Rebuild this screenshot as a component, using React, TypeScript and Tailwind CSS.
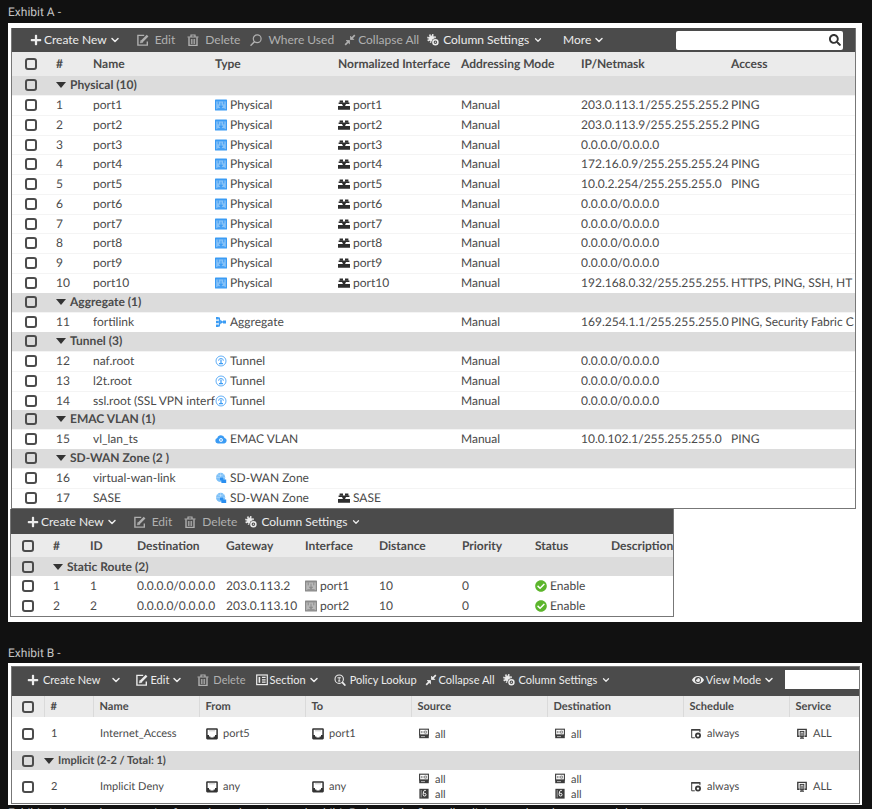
import React from 'react';
import clsx from 'clsx';
import { ChevronDown } from 'lucide-react';
import { FaPlus, FaSearch, FaEye, FaCheckCircle } from 'react-icons/fa';

type IconProps = { className?: string };

const EditIcon = ({ className }: IconProps) => (
  <svg viewBox="0 0 12 12" className={className} fill="none" stroke="currentColor">
    <path d="M7.2 1.4H.9v9.7h9.4V7.4" strokeWidth="1.4" />
    <path d="M4.6 7.6 10.6 1.6" strokeWidth="2.4" />
    <path d="m3.2 9 .6-2.6 2 2z" fill="currentColor" strokeWidth="0.4" />
  </svg>
);

const TrashIcon = ({ className }: IconProps) => (
  <svg viewBox="0 0 12 12" className={className} fill="none" stroke="currentColor">
    <path d="M0.5 3h11M4 2.6V1h4v1.6" strokeWidth="1.2" />
    <path d="M2 3.2v8.2h8V3.2" strokeWidth="1.4" />
    <path d="M4.4 5v5M6 5v5M7.6 5v5" strokeWidth="0.9" />
  </svg>
);

const WhereIcon = ({ className }: IconProps) => (
  <svg viewBox="0 0 12 12" className={className} fill="none" stroke="currentColor" strokeWidth="1.2" strokeLinecap="round">
    <circle cx="7.2" cy="4.8" r="3.9" />
    <path d="M4.4 7.8 1 11.2" strokeWidth="1.5" />
  </svg>
);

const CollapseIcon = ({ className }: IconProps) => (
  <svg viewBox="0 0 12 12" className={className} fill="currentColor" stroke="currentColor">
    <path d="M6.5 2.2v3.3h3.3zM5.5 9.8V6.5H2.2z" strokeWidth="0.8" />
    <path d="M10.8 1.2 7.5 4.5M1.2 10.8 4.5 7.5" strokeWidth="1.7" />
  </svg>
);

const GearsIcon = ({ className }: IconProps) => (
  <svg viewBox="0 0 12 12" className={className} fill="none" stroke="currentColor">
    <circle cx="4.6" cy="4.6" r="2.6" fill="currentColor" />
    <circle cx="4.6" cy="4.6" r="3.7" strokeWidth="1.6" strokeDasharray="1.6 1.3" />
    <circle cx="8.4" cy="8.2" r="3.5" className="fill-[#4b4b4b] stroke-[#4b4b4b]" />
    <circle cx="8.4" cy="8.2" r="2.5" strokeWidth="1.5" />
    <circle cx="8.4" cy="8.2" r="0.5" fill="currentColor" strokeWidth="0.4" />
  </svg>
);

const SectionIcon = ({ className }: IconProps) => (
  <svg viewBox="0 0 12 12" className={className} fill="none" stroke="currentColor">
    <rect x="0.7" y="1" width="10.6" height="9.6" strokeWidth="1.2" />
    <path d="M3.4 3v5.8" strokeWidth="1.6" />
    <path d="M6 3.4h3.6M6 5.8h3.6M6 8.2h3.6" strokeWidth="1.3" />
  </svg>
);

const LookupIcon = ({ className }: IconProps) => (
  <svg viewBox="0 0 12 12" className={className} fill="none" stroke="currentColor" strokeLinecap="round">
    <circle cx="5.2" cy="5.2" r="4.2" strokeWidth="1.1" />
    <path d="M8.6 8.6 10.8 11" strokeWidth="1.8" />
    <path d="M3.8 3.8h2.8M5.2 3.8v3.2M4.4 7h1.6" strokeWidth="0.9" />
  </svg>
);

const PhysicalIcon = ({ className }: IconProps) => (
  <svg viewBox="0 0 12 12" className={className}>
    <rect y="0.4" width="12" height="11.2" rx="0.6" className="fill-current" />
    <path d="M1.2 2.4h9.6v7.8H1.2z" fill="white" fillOpacity="0.4" />
    <path d="M3.2 2.4v3M8.8 2.4v3M6 3.6v4" stroke="currentColor" strokeWidth="1" />
    <path d="M3.6 6.8h4.8L6 9.4zM2.4 9.2h7.2v1H2.4z" className="fill-current" />
  </svg>
);

const AggregateIcon = ({ className }: IconProps) => (
  <svg viewBox="0 0 12 12" className={className} fill="none" stroke="currentColor">
    <path d="M1.4 2.2h3v7.6h-3M1.4 6H9" strokeWidth="1.2" />
    <path d="M1 1h2.6v2.4H1zM1 8.6h2.6V11H1zM1 4.8h2.6v2.4H1zM8 4.6h3v2.8H8z" fill="currentColor" stroke="none" />
    <path d="m5.2 3.4 2.8 2.6-2.8 2.6z" fill="currentColor" stroke="none" />
  </svg>
);

const TunnelIcon = ({ className }: IconProps) => (
  <svg viewBox="0 0 12 12" className={className} fill="none" stroke="currentColor">
    <circle cx="6" cy="6" r="5" strokeWidth="0.8" />
    <path d="M3.6 5.8a2.4 2.4 0 1 1 4.8 0" strokeWidth="0.8" />
    <path d="M6 4.6v3.6M4 8.6h4" strokeWidth="1.2" />
  </svg>
);

const CloudIcon = ({ className }: IconProps) => (
  <svg viewBox="0 0 12 12" className={className}>
    <path d="M2.8 10.4a2.7 2.7 0 0 1-.5-5.3A3.8 3.8 0 0 1 9.6 5a2.75 2.75 0 0 1-.4 5.4z" className="fill-current" />
    <circle cx="6" cy="7" r="1.6" fill="none" stroke="white" strokeWidth="0.8" />
    <path d="M6 6.2v1.8" stroke="white" strokeWidth="0.8" />
  </svg>
);

const ZoneIcon = ({ className }: IconProps) => (
  <svg viewBox="0 0 12 12" className={className}>
    <circle cx="5.6" cy="5.4" r="4.6" className="fill-[#7cc0f8]" />
    <path d="M1 5.4h9.2M5.6.8V10M2.2 2.4c2 1.4 4.8 1.4 6.6 0" fill="none" stroke="white" strokeOpacity="0.5" strokeWidth="0.6" />
    <path d="M5 5.4h3.2v2.2h3V11H6.4V8.6H5z" className="fill-[#2b8ff0]" />
  </svg>
);

const MappedIcon = ({ className }: IconProps) => (
  <svg viewBox="0 0 12 12" className={className} fill="currentColor">
    <path d="M1.6 1.4h3.4v2.4H1.6zM7 1.4h3.4v2.4H7zM0 7h12v3.8H0z" />
    <path d="M.6 3.6h10.8v1.3H8L6.8 7.4H5.2L4 4.9H.6z" />
  </svg>
);

const PortIcon = ({ className }: IconProps) => (
  <svg viewBox="0 0 12 12" className={className}>
    <rect x="0.9" y="0.9" width="10.2" height="9.8" rx="0.4" fill="none" stroke="currentColor" strokeWidth="1.5" />
    <path d="M1 11V7h2v1.6h1.4v.8h3.2v-.8H9V7h2v4z" className="fill-current" />
    <path d="M3 2.8h6" stroke="currentColor" strokeWidth="0.7" strokeOpacity="0.4" />
  </svg>
);

const AddressIcon = ({ className }: IconProps) => (
  <svg viewBox="0 0 12 12" className={className}>
    <rect x="1.6" y="1.2" width="8.8" height="5.8" fill="none" stroke="currentColor" strokeWidth="1.1" />
    <path d="M3.4 3v2.2M5 3v2.2M6.6 3h1.8v2.2H6.6z" fill="none" stroke="currentColor" strokeWidth="0.8" strokeOpacity="0.7" />
    <path d="M1.2 6.8h9.6v3.4H1.2z" className="fill-current" />
    <path d="M3 8.6h4" stroke="white" strokeWidth="0.6" />
  </svg>
);

const Address6Icon = ({ className }: IconProps) => (
  <svg viewBox="0 0 12 12" className={className}>
    <rect x="1.4" y="0.8" width="9.2" height="9.8" className="fill-current" />
    <path d="M7.8 2.4H6.4Q5.2 3.6 5.2 6v.6a1.4 1.4 0 1 0 1-1.3" fill="none" stroke="white" strokeWidth="1" />
    <path d="M3.2 2v7.4" stroke="white" strokeWidth="0.5" />
  </svg>
);

const ScheduleIcon = ({ className }: IconProps) => (
  <svg viewBox="0 0 12 12" className={className} fill="none" stroke="currentColor">
    <path d="M4.8 9.8H1.7V1.8h8.2v2.4" strokeWidth="1" />
    <path d="M1.2 1.8h9.2" strokeWidth="1.5" />
    <circle cx="8" cy="7.6" r="2.1" strokeWidth="1.8" />
  </svg>
);

const ServiceIcon = ({ className }: IconProps) => (
  <svg viewBox="0 0 12 12" className={className} fill="none" stroke="currentColor">
    <path d="M3.4 8.2H1.8V1.4h8.4v6.8H8.6" strokeWidth="1.4" />
    <rect x="4.2" y="3.4" width="3.6" height="5" strokeWidth="1" />
    <path d="M6 4.4V10M4 10.2h4" strokeWidth="1.2" />
  </svg>
);

const Check = ({ label }: { label: string }) => (
  <input
    type="checkbox"
    aria-label={label}
    className="block size-3 appearance-none rounded-[3px] border-2 border-[#4c4c4c] checked:bg-[#4c4c4c]"
  />
);

const Caret = () => <span className="border-x-[5px] border-t-[6px] border-x-transparent border-t-[#333]" />;

const Cell = ({ icon: Icon, color, gap = 'gap-[3px]', children }: {
  icon: React.FC<IconProps>;
  color: string;
  gap?: string;
  children: React.ReactNode;
}) => (
  <span className={clsx('flex items-center', gap)}>
    <Icon className={clsx('size-3 shrink-0', color)} />
    <span>{children}</span>
  </span>
);

interface ToolProps {
  icon?: React.FC<IconProps>;
  label: string;
  muted?: boolean;
  menu?: 'normal' | 'small';
  className?: string;
}

const Tool = ({ icon: Icon, label, muted, menu, className }: ToolProps) => (
  <button type="button" className={clsx('flex shrink-0 items-center whitespace-nowrap', muted ? 'text-[#b0b0b0]' : 'text-[#ececec]', className)}>
    {Icon && <Icon className="size-3 shrink-0" />}
    <span>{label}</span>
    {menu && <ChevronDown className={clsx('shrink-0', menu === 'small' ? 'size-2.5' : 'size-3')} strokeWidth={3} />}
  </button>
);

const physical = [
  ['203.0.113.1/255.255.255.2', 'PING'],
  ['203.0.113.9/255.255.255.2', 'PING'],
  ['0.0.0.0/0.0.0.0', ''],
  ['172.16.0.9/255.255.255.24', 'PING'],
  ['10.0.2.254/255.255.255.0', 'PING'],
  ['0.0.0.0/0.0.0.0', ''],
  ['0.0.0.0/0.0.0.0', ''],
  ['0.0.0.0/0.0.0.0', ''],
  ['0.0.0.0/0.0.0.0', ''],
  ['192.168.0.32/255.255.255.', 'HTTPS, PING, SSH, HT'],
];

interface Row {
  id: number;
  name: string;
  mapped?: string;
  mode?: string;
  ip?: string;
  access?: string;
}

interface Group {
  title: string;
  type: string;
  icon: React.FC<IconProps>;
  rows: Row[];
}

const groups: Group[] = [
  {
    title: 'Physical (10)',
    type: 'Physical',
    icon: PhysicalIcon,
    rows: physical.map(([ip, access], i) => ({
      id: i + 1,
      name: `port${i + 1}`,
      mapped: `port${i + 1}`,
      mode: 'Manual',
      ip,
      access,
    })),
  },
  {
    title: 'Aggregate (1)',
    type: 'Aggregate',
    icon: AggregateIcon,
    rows: [{ id: 11, name: 'fortilink', mode: 'Manual', ip: '169.254.1.1/255.255.255.0', access: 'PING, Security Fabric C' }],
  },
  {
    title: 'Tunnel (3)',
    type: 'Tunnel',
    icon: TunnelIcon,
    rows: [
      { id: 12, name: 'naf.root', mode: 'Manual', ip: '0.0.0.0/0.0.0.0' },
      { id: 13, name: 'l2t.root', mode: 'Manual', ip: '0.0.0.0/0.0.0.0' },
      { id: 14, name: 'ssl.root (SSL VPN interf', mode: 'Manual', ip: '0.0.0.0/0.0.0.0' },
    ],
  },
  {
    title: 'EMAC VLAN (1)',
    type: 'EMAC VLAN',
    icon: CloudIcon,
    rows: [{ id: 15, name: 'vl_lan_ts', mode: 'Manual', ip: '10.0.102.1/255.255.255.0', access: 'PING' }],
  },
  {
    title: 'SD-WAN Zone (2 )',
    type: 'SD-WAN Zone',
    icon: ZoneIcon,
    rows: [
      { id: 16, name: 'virtual-wan-link' },
      { id: 17, name: 'SASE', mapped: 'SASE' },
    ],
  },
];

const routes = [
  { id: 1, gateway: '203.0.113.2', port: 'port1' },
  { id: 2, gateway: '203.0.113.10', port: 'port2' },
];

const policies = [
  { id: 1, name: 'Internet_Access', from: 'port5', to: 'port1', v6: false },
  { id: 2, name: 'Implicit Deny', from: 'any', to: 'any', v6: true },
];

const GroupRow = ({ title, span, pad }: { title: string; span: number; pad: string }) => (
  <tr className="h-[19px] bg-[#dcdcdc] font-bold">
    <td className={pad}><Check label={`Select ${title}`} /></td>
    <td colSpan={span}>
      <span className="flex items-center gap-1"><Caret />{title}</span>
    </td>
  </tr>
);

const InterfaceTable = () => (
  <table className="w-full table-fixed whitespace-nowrap text-left">
    <colgroup>
      <col className="w-11" />
      <col className="w-[37px]" />
      <col className="w-[122px]" />
      <col className="w-[123px]" />
      <col className="w-[123px]" />
      <col className="w-[120px]" />
      <col className="w-[150px]" />
      <col />
    </colgroup>
    <thead>
      <tr className="h-6 bg-[#ebebeb]">
        <td className="pl-[13px]"><Check label="Select all interfaces" /></td>
        {['#', 'Name', 'Type', 'Normalized Interface', 'Addressing Mode', 'IP/Netmask', 'Access'].map((h) => (
          <th key={h}>{h}</th>
        ))}
      </tr>
    </thead>
    {groups.map((g) => (
      <tbody key={g.title}>
        <GroupRow title={g.title} span={7} pad="pl-[13px]" />
        {g.rows.map((r) => (
          <tr key={r.id} className="h-5 border-t border-[#f4f4f4] nth-[4n]:h-[19px]">
            <td className="pl-[13px]"><Check label={`Select ${r.name}`} /></td>
            <td>{r.id}</td>
            <td className="overflow-hidden">{r.name}</td>
            <td><Cell icon={g.icon} color="text-[#3a9bf4]">{g.type}</Cell></td>
            <td>{r.mapped && <Cell icon={MappedIcon} color="text-[#2e2e2e]">{r.mapped}</Cell>}</td>
            <td>{r.mode}</td>
            <td className="overflow-hidden">{r.ip}</td>
            <td className="overflow-hidden">{r.access}</td>
          </tr>
        ))}
      </tbody>
    ))}
  </table>
);

const RouteTable = () => (
  <table className="w-full table-fixed whitespace-nowrap text-left">
    <colgroup>
      <col className="w-[42px]" />
      <col className="w-[37px]" />
      <col className="w-[47px]" />
      <col className="w-[89px]" />
      <col className="w-[79px]" />
      <col className="w-[74px]" />
      <col className="w-[83px]" />
      <col className="w-[73px]" />
      <col className="w-[76px]" />
      <col />
    </colgroup>
    <thead>
      <tr className="h-[23px] bg-[#ebebeb]">
        <td className="pl-[11px]"><Check label="Select all routes" /></td>
        {['#', 'ID', 'Destination', 'Gateway', 'Interface', 'Distance', 'Priority', 'Status', 'Description'].map((h) => (
          <th key={h}>{h}</th>
        ))}
      </tr>
    </thead>
    <tbody>
      <GroupRow title="Static Route (2)" span={9} pad="pl-[11px]" />
      {routes.map((r) => (
        <tr key={r.id} className="h-5">
          <td className="pl-[11px]"><Check label={`Select route ${r.id}`} /></td>
          <td>{r.id}</td>
          <td>{r.id}</td>
          <td>0.0.0.0/0.0.0.0</td>
          <td>{r.gateway}</td>
          <td><Cell icon={PhysicalIcon} color="text-[#8a8a8a]">{r.port}</Cell></td>
          <td>10</td>
          <td>0</td>
          <td><Cell icon={FaCheckCircle} color="text-[#5cb52c]">Enable</Cell></td>
          <td />
        </tr>
      ))}
    </tbody>
  </table>
);

const AddressCell = ({ v6 }: { v6: boolean }) => (
  <div className="flex flex-col leading-[15px]">
    <Cell icon={AddressIcon} color="text-[#3c3c3c]" gap="gap-[5px]">all</Cell>
    {v6 && <Cell icon={Address6Icon} color="text-[#3c3c3c]" gap="gap-[5px]">all</Cell>}
  </div>
);

const PolicyTable = () => (
  <table className="w-full table-fixed whitespace-nowrap text-left text-[11px]">
    <colgroup>
      <col className="w-8" />
      <col className="w-[49px]" />
      <col className="w-[106px]" />
      <col className="w-[106px]" />
      <col className="w-[106px]" />
      <col className="w-[136px]" />
      <col className="w-[136px]" />
      <col className="w-[106px]" />
      <col />
    </colgroup>
    <thead>
      <tr className="h-[21px] bg-[#ebebeb]">
        <td className="pl-2.5"><Check label="Select all policies" /></td>
        {['#', 'Name', 'From', 'To', 'Source', 'Destination', 'Schedule', 'Service'].map((h) => (
          <th key={h} className="border-l border-[#dadada] pl-1.5">{h}</th>
        ))}
      </tr>
    </thead>
    <tbody>
      {policies.map((p) => (
        <React.Fragment key={p.id}>
          {p.v6 && <GroupRow title="Implicit (2-2 / Total: 1)" span={8} pad="pl-2.5" />}
          <tr className="h-[34px] last:h-[33px]">
            <td className="pl-2.5"><Check label={`Select ${p.name}`} /></td>
            <td className="pl-[7px]">{p.id}</td>
            <td className="pl-[7px]">{p.name}</td>
            <td className="pl-[7px]"><Cell icon={PortIcon} color="text-[#333]" gap="gap-[5px]">{p.from}</Cell></td>
            <td className="pl-[7px]"><Cell icon={PortIcon} color="text-[#333]" gap="gap-[5px]">{p.to}</Cell></td>
            <td className="pl-[7px]"><AddressCell v6={p.v6} /></td>
            <td className="pl-[7px]"><AddressCell v6={p.v6} /></td>
            <td className="pl-[7px]"><Cell icon={ScheduleIcon} color="text-[#3c3c3c]" gap="gap-[5px]">always</Cell></td>
            <td className="pl-[7px]"><Cell icon={ServiceIcon} color="text-[#3c3c3c]" gap="gap-[5px]">ALL</Cell></td>
          </tr>
        </React.Fragment>
      ))}
    </tbody>
  </table>
);

const App: React.FC = () => {
  return (
    <main className="h-screen overflow-hidden bg-[#111] pr-2.5 pl-2 font-['Roboto',sans-serif] text-xs text-[#c4c4c4] [text-rendering:geometricPrecision]">
      <h2 className="pt-1 pb-[3px] leading-4">Exhibit A -</h2>

      <section className="bg-white pt-[5px] pr-1.5 pb-[5px] pl-0.5 font-['Lato',sans-serif] leading-4 text-[#4a4a4a]">
        <div className="ml-px border-r border-b border-l border-[#777]">
          <div className="flex h-6 items-center bg-[#4b4b4b] pr-3 pl-[18px]">
            <Tool icon={FaPlus} label="Create New" menu="normal" className="gap-0.5" />
            <Tool icon={EditIcon} label="Edit" muted className="ml-4 gap-1.5" />
            <Tool icon={TrashIcon} label="Delete" muted className="ml-3 gap-1.5" />
            <Tool icon={WhereIcon} label="Where Used" muted className="ml-2.5 gap-1.5" />
            <Tool icon={CollapseIcon} label="Collapse All" muted className="ml-2.5 gap-0.5" />
            <Tool icon={GearsIcon} label="Column Settings" menu="small" className="ml-2 gap-1" />
            <Tool label="More" menu="normal" className="ml-5 gap-0.5" />
            <label className="ml-auto flex h-[19px] w-[167px] items-center rounded-xs bg-white pr-0.5 text-[#333]">
              <input type="text" aria-label="Search" className="min-w-0 flex-1 px-1 outline-none" />
              <FaSearch className="size-3" />
            </label>
          </div>
          <InterfaceTable />
        </div>

        <div className="w-[664px] border-r border-b border-l border-[#777]">
          <div className="flex h-[25px] items-center bg-[#4b4b4b] pl-4">
            <Tool icon={FaPlus} label="Create New" menu="normal" className="gap-0.5" />
            <Tool icon={EditIcon} label="Edit" muted className="ml-4 gap-1.5" />
            <Tool icon={TrashIcon} label="Delete" muted className="ml-3 gap-1.5" />
            <Tool icon={GearsIcon} label="Column Settings" menu="small" className="ml-2 gap-1" />
          </div>
          <RouteTable />
        </div>
      </section>

      <h2 className="pt-[23px] pb-0.5 leading-4">Exhibit B -</h2>

      <section className="bg-white pt-[3px] pr-0.5 pb-px pl-[3px] font-['Lato',sans-serif] leading-4 text-[#4a4a4a]">
        <div className="border border-[#777]">
          <div className="flex h-[29px] items-center bg-[#4b4b4b] pb-1 pl-[15px] text-[11px]">
            <Tool icon={FaPlus} label="Create New" className="gap-1" />
            <button type="button" aria-label="Create options" className="ml-2.5 text-[#ececec]">
              <ChevronDown className="size-3" strokeWidth={3} />
            </button>
            <Tool icon={EditIcon} label="Edit" menu="normal" className="ml-3.5 gap-0.5" />
            <Tool icon={TrashIcon} label="Delete" muted className="ml-3.5 gap-1" />
            <Tool icon={SectionIcon} label="Section" menu="normal" className="ml-2.5 gap-0.5" />
            <Tool icon={LookupIcon} label="Policy Lookup" className="ml-3.5 gap-1" />
            <Tool icon={CollapseIcon} label="Collapse All" className="ml-2 gap-0.5" />
            <Tool icon={GearsIcon} label="Column Settings" menu="small" className="ml-2 gap-1" />
            <Tool icon={FaEye} label="View Mode" menu="normal" className="mr-2.5 ml-auto gap-0.5" />
            <input type="text" aria-label="Search policies" className="h-[19px] w-[74px] bg-white px-1 text-[#333] outline-none" />
          </div>
          <PolicyTable />
        </div>
      </section>

      <p className="leading-4 whitespace-nowrap">
        Exhibit A shows the properties for outbound routing, and exhibit B shows the firewall policies used on the managed device.
      </p>
    </main>
  );
};

export default App;
